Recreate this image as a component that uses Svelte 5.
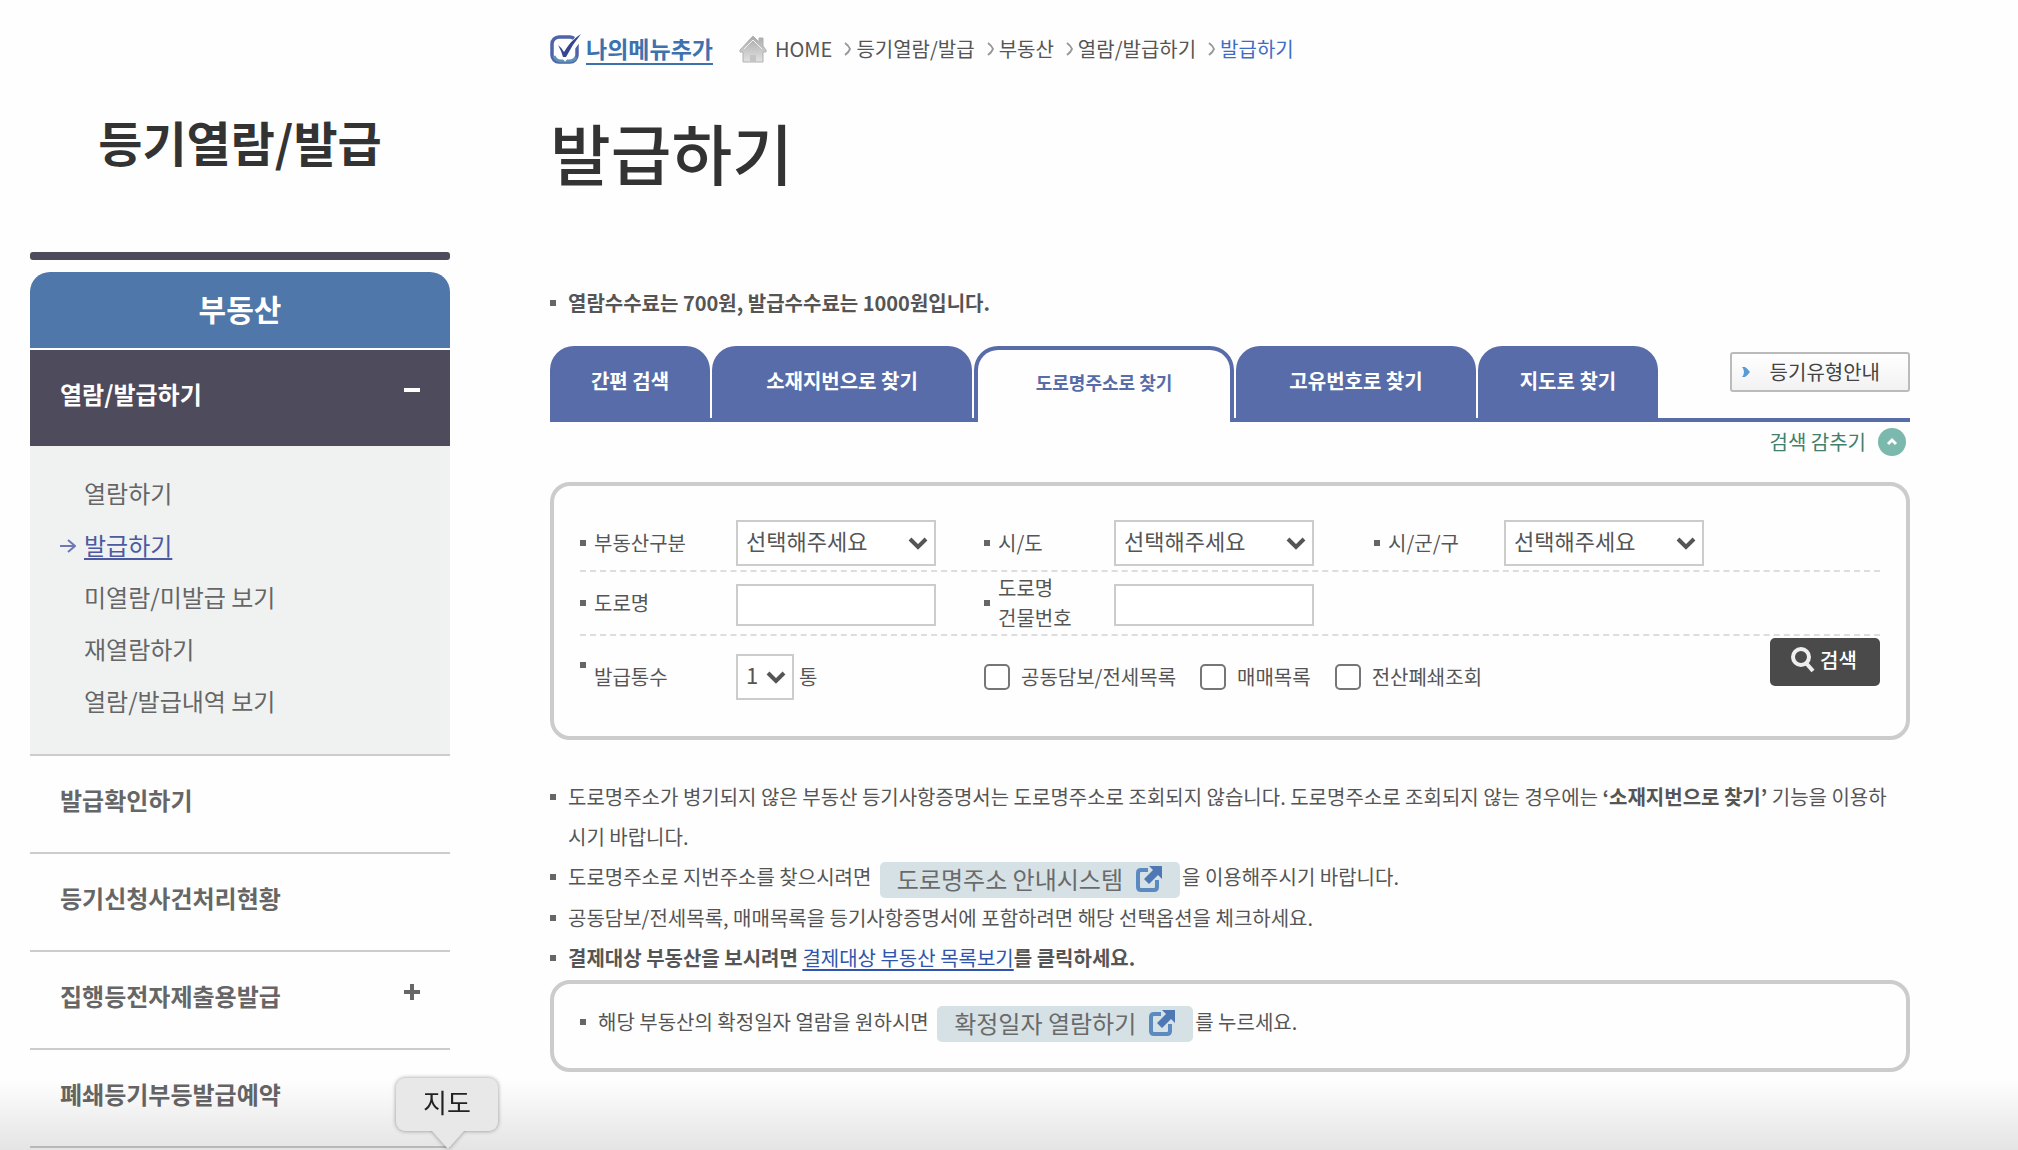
<script>
  const subMenu = [
    "열람하기",
    "발급하기",
    "미열람/미발급 보기",
    "재열람하기",
    "열람/발급내역 보기",
  ];

  const menu = [
    { label: "발급확인하기" },
    { label: "등기신청사건처리현황" },
    { label: "집행등전자제출용발급", more: true },
    { label: "폐쇄등기부등발급예약" },
  ];

  const path = ["등기열람/발급", "부동산", "열람/발급하기", "발급하기"];

  const tabs = [
    { label: "간편 검색", size: 160 },
    { label: "소재지번으로 찾기", size: 260 },
    { label: "도로명주소로 찾기", size: 260 },
    { label: "고유번호로 찾기", size: 240 },
    { label: "지도로 찾기", size: 180 },
  ];

  const options = ["공동담보/전세목록", "매매목록", "전산폐쇄조회"];

  let currentSub = "발급하기";
  let currentTab = "도로명주소로 찾기";
</script>

<div class="page">
  <aside>
    <h2>등기열람/발급</h2>
    <div class="bar"></div>
    <div class="category">부동산</div>
    <a class="item open" href="#open">
      열람/발급하기
      <svg class="sign" viewBox="0 0 16 16"><path d="M0 8h16" /></svg>
    </a>
    <ul class="sub">
      {#each subMenu as name}
        <li class:current={name === currentSub}>
          {#if name === currentSub}
            <svg class="arrow" viewBox="0 0 16 14"><path d="M0 7h15M8 1l7 6-7 6" /></svg>
          {/if}
          <a href="#sub">{name}</a>
        </li>
      {/each}
    </ul>
    {#each menu as m}
      <a class="item" href="#menu">
        {m.label}
        {#if m.more}
          <svg class="sign" viewBox="0 0 16 16"><path d="M0 8h16M8 0v16" /></svg>
        {/if}
      </a>
    {/each}
  </aside>

  <main>
    <div class="crumbs">
      <a class="mymenu" href="#mymenu">
        <svg viewBox="0 0 32 30">
          <rect x="2" y="3" width="25" height="25" rx="7" fill="#fff" stroke="#4f63a8" stroke-width="3.5" />
          <path d="M4 22q2 5 7 5h8q5 0 7-4" fill="none" stroke="#5b93b8" stroke-width="3" />
          <path d="M7 12l8 10L31 1" fill="none" stroke="#fff" stroke-width="7" />
          <path d="M8 11q4 3 6 7Q21 6 31 0 22 11 16 23h-3Q11 16 8 11z" fill="#34468f" />
        </svg>
        <span>나의메뉴추가</span>
      </a>
      <svg class="house" viewBox="0 0 28 28">
        <defs>
          <linearGradient id="roof" x1="0" y1="0" x2="0" y2="1">
            <stop offset="0" stop-color="#a9a9a9" />
            <stop offset="1" stop-color="#e2e2e2" />
          </linearGradient>
        </defs>
        <path d="M14 1l6 6V3h4v8l3 4v2h-3v10H4V17H1v-2z" fill="url(#roof)" stroke="#b0b0b0" />
        <path d="M5 14l9-9 9 9" fill="none" stroke="#f1f1f1" />
        <path d="M11 27v-7h6v7" fill="#c4c4c4" />
      </svg>
      <a href="#home">HOME</a>
      {#each path as p, i}
        <svg class="chev" viewBox="0 0 8 14"><path d="M1 1q4 3 5 6-1 3-5 6" /></svg>
        <a href="#path" class:here={i === path.length - 1}>{p}</a>
      {/each}
    </div>

    <h1>발급하기</h1>

    <ul class="notes fee">
      <li><strong>열람수수료는 700원, 발급수수료는 1000원입니다.</strong></li>
    </ul>

    <div class="tabrow">
      <nav>
        {#each tabs as t}
          <button
            class="tab"
            class:active={t.label === currentTab}
            style="width: {t.size}px"
            on:click={() => (currentTab = t.label)}>{t.label}</button>
        {/each}
      </nav>
      <button class="guide">
        <svg viewBox="0 0 8 12"><path d="M0 1h3q3 2 5 5-2 3-5 5H0q2-2 2-5T0 1z" /></svg>
        등기유형안내
      </button>
    </div>

    <button class="fold">
      검색 감추기
      <svg viewBox="0 0 28 28">
        <circle cx="14" cy="14" r="14" fill="#7bb8ad" />
        <path d="M10 16l4-4 4 4" fill="none" stroke="#fff" stroke-width="3" />
      </svg>
    </button>

    <form class="box" on:submit|preventDefault>
      <div class="row first">
        <label for="kind">부동산구분</label>
        <div class="pick">
          <select id="kind"><option>선택해주세요</option></select>
          <svg viewBox="0 0 20 14"><path d="M2 3l8 8 8-8" /></svg>
        </div>
        <label for="sido">시/도</label>
        <div class="pick">
          <select id="sido"><option>선택해주세요</option></select>
          <svg viewBox="0 0 20 14"><path d="M2 3l8 8 8-8" /></svg>
        </div>
        <label for="gu">시/군/구</label>
        <div class="pick">
          <select id="gu"><option>선택해주세요</option></select>
          <svg viewBox="0 0 20 14"><path d="M2 3l8 8 8-8" /></svg>
        </div>
      </div>
      <div class="row">
        <label for="road">도로명</label>
        <input id="road" type="text" />
        <label for="bldg"><span>도로명<br />건물번호</span></label>
        <input id="bldg" type="text" />
      </div>
      <div class="row last">
        <label class="top" for="copies">발급통수</label>
        <div class="copies">
          <div class="pick small">
            <select id="copies"><option>1</option></select>
            <svg viewBox="0 0 20 14"><path d="M2 3l8 8 8-8" /></svg>
          </div>
          통
        </div>
        <div class="checks">
          {#each options as o}
            <label><input type="checkbox" />{o}</label>
          {/each}
        </div>
        <button class="search" type="submit">
          <svg viewBox="0 0 26 26">
            <circle cx="11" cy="10" r="8" />
            <path d="M16 16l7 8" />
          </svg>
          검색
        </button>
      </div>
    </form>

    <ul class="notes">
      <li>
        도로명주소가 병기되지 않은 부동산 등기사항증명서는 도로명주소로 조회되지 않습니다. 도로명주소로 조회되지 않는 경우에는 <strong>‘소재지번으로 찾기’</strong> 기능을 이용하시기 바랍니다.
      </li>
      <li>
        도로명주소로 지번주소를 찾으시려면
        <a class="chip" href="#juso">도로명주소 안내시스템<svg viewBox="0 0 28 28">
          <path d="M13 5H6q-3 0-3 3v14q0 3 3 3h13q3 0 3-3v-7" fill="none" stroke="#5a8ac0" stroke-width="4" />
          <path d="M14 1h13v13l-4-4-9 9-5-5 9-9z" fill="#4d78b4" />
        </svg></a>을 이용해주시기 바랍니다.
      </li>
      <li>공동담보/전세목록, 매매목록을 등기사항증명서에 포함하려면 해당 선택옵션을 체크하세요.</li>
      <li>
        <strong>결제대상 부동산을 보시려면</strong>
        <a class="link" href="#pay">결제대상 부동산 목록보기</a><strong>를 클릭하세요.</strong>
      </li>
    </ul>

    <div class="box fixdate">
      <ul class="notes">
        <li>
          해당 부동산의 확정일자 열람을 원하시면
          <a class="chip" href="#date">확정일자 열람하기<svg viewBox="0 0 28 28">
            <path d="M13 5H6q-3 0-3 3v14q0 3 3 3h13q3 0 3-3v-7" fill="none" stroke="#5a8ac0" stroke-width="4" />
            <path d="M14 1h13v13l-4-4-9 9-5-5 9-9z" fill="#4d78b4" />
          </svg></a>를 누르세요.
        </li>
      </ul>
    </div>
  </main>
</div>

<div class="shade"></div>
<div class="tip">지도</div>

<style>
  :global(body) {
    background: #fefefe;
    color: #555;
    font-family: "Noto Sans CJK KR", "Noto Sans", sans-serif;
    font-size: 20px;
    line-height: 30px;
  }
  * {
    box-sizing: border-box;
  }
  h1,
  h2,
  ul {
    margin: 0;
    padding: 0;
  }
  ul {
    list-style: none;
  }
  a {
    color: inherit;
    text-decoration: none;
  }
  button,
  input,
  select {
    font: inherit;
    color: inherit;
    margin: 0;
  }
  .page {
    display: flex;
    gap: 100px;
    padding: 0 108px 0 30px;
  }

  /* left menu */
  aside {
    flex: none;
    width: 420px;
    font-size: 24px;
    color: #666;
  }
  h2 {
    padding-top: 105px;
    height: 252px;
    font-size: 48px;
    line-height: 72px;
    text-align: center;
    color: #333;
  }
  .bar {
    height: 8px;
    border-radius: 3px;
    background: #4e4c5c;
  }
  .category {
    margin: 12px 0 2px;
    height: 76px;
    border-radius: 20px 20px 0 0;
    background: #4f77aa;
    color: #fff;
    font-size: 30px;
    font-weight: bold;
    line-height: 72px;
    text-align: center;
  }
  .item {
    display: flex;
    align-items: center;
    justify-content: space-between;
    height: 98px;
    padding: 0 30px 8px;
    border-bottom: 2px solid #ccc;
    font-weight: bold;
  }
  .item.open {
    height: 96px;
    border: 0;
    background: #4e4c5c;
    color: #fff;
  }
  .sign {
    width: 16px;
    height: 16px;
    margin-bottom: 8px;
    stroke: currentColor;
    stroke-width: 4;
  }
  .sub {
    padding: 21px 0 27px 54px;
    border-bottom: 2px solid #ccc;
    background: #f0f2f1;
  }
  .sub li {
    position: relative;
    height: 52px;
    line-height: 52px;
  }
  .sub .current {
    color: #4d5aa0;
  }
  .current a {
    text-decoration: underline;
    text-decoration-thickness: 2px;
    text-underline-offset: 3px;
  }
  .arrow {
    position: absolute;
    left: -24px;
    top: 20px;
    width: 16px;
    height: 14px;
    fill: none;
    stroke: #7078b4;
    stroke-width: 2;
  }

  /* content */
  main {
    flex: 1;
    min-width: 0;
  }
  .crumbs {
    display: flex;
    align-items: center;
    height: 98px;
  }
  .crumbs svg {
    flex: none;
  }
  .mymenu {
    display: flex;
    align-items: center;
    gap: 4px;
    margin-right: 26px;
    color: #3e72ae;
    font-size: 23px;
    font-weight: bold;
  }
  .mymenu svg {
    width: 32px;
    height: 30px;
  }
  .mymenu span {
    border-bottom: 2px solid #3e72ae;
  }
  .house {
    width: 28px;
    height: 28px;
    margin-right: 8px;
  }
  .chev {
    width: 8px;
    height: 14px;
    margin: 0 4px 0 12px;
    fill: none;
    stroke: #999;
    stroke-width: 2;
  }
  .here {
    color: #3c6cc8;
  }
  h1 {
    height: 185px;
    padding-top: 5px;
    font-size: 66px;
    font-weight: 500;
    line-height: 96px;
    color: #333;
  }
  .notes li {
    position: relative;
    padding: 0 12px 0 18px;
    line-height: 40px;
  }
  .notes li::before,
  .row > label::before {
    content: "";
    flex: none;
    width: 6px;
    height: 6px;
    background: #666;
  }
  .notes li::before {
    position: absolute;
    left: 0;
    top: 17px;
  }
  .fee {
    margin-bottom: 23px;
  }
  .tabrow {
    display: flex;
    justify-content: space-between;
    border-bottom: 4px solid #576ca8;
  }
  nav {
    display: flex;
    gap: 2px;
  }
  .tab {
    height: 72px;
    padding: 0 0 2px;
    border: 0;
    border-radius: 24px 24px 0 0;
    background: #576ca8;
    color: #fff;
    font-weight: bold;
  }
  .tab.active {
    height: 76px;
    margin-bottom: -4px;
    padding-bottom: 8px;
    border: 4px solid #576ca8;
    border-bottom: 0;
    background: #fefefe;
    color: #576ca8;
    font-size: 18px;
  }
  .guide {
    display: flex;
    align-items: center;
    justify-content: space-between;
    width: 180px;
    height: 40px;
    margin-top: 6px;
    padding: 0 28px 0 10px;
    border: 2px solid #bbb;
    border-radius: 3px;
    background: linear-gradient(#fff, #f2f2f2);
    color: #444;
  }
  .guide svg {
    width: 8px;
    height: 12px;
    fill: #5b9bd5;
  }
  .fold {
    display: flex;
    align-items: center;
    gap: 12px;
    margin: 6px 4px 26px auto;
    padding: 0;
    height: 28px;
    border: 0;
    background: none;
    color: #40806c;
  }
  .fold svg {
    width: 28px;
    height: 28px;
  }
  .box {
    border: 4px solid #ccc;
    border-radius: 20px;
    padding: 22px 26px 18px;
  }
  .row {
    display: grid;
    grid-template-columns: 156px 248px 130px 260px 130px 1fr;
    align-items: center;
    height: 64px;
    border-bottom: 2px dashed #ddd;
  }
  .row.first {
    padding-top: 8px;
  }
  .row.last {
    grid-template-columns: 156px 248px 1fr auto;
    height: 82px;
    border: 0;
  }
  .row > label {
    display: flex;
    align-items: center;
    gap: 8px;
  }
  .row > .top {
    align-items: flex-start;
  }
  .pick {
    position: relative;
    width: 200px;
  }
  .pick.small {
    width: 58px;
  }
  select,
  input[type="text"] {
    width: 200px;
    height: 46px;
    border: 2px solid #ccc;
    border-radius: 0;
    background: #fff;
  }
  input[type="text"] {
    height: 42px;
    margin-top: 3px;
  }
  select {
    appearance: none;
    width: 100%;
    padding: 0 8px 6px;
    font-size: 22px;
  }
  .pick svg {
    position: absolute;
    right: 8px;
    top: 16px;
    width: 20px;
    height: 14px;
    fill: none;
    stroke: #555;
    stroke-width: 4;
    pointer-events: none;
  }
  .copies {
    display: flex;
    align-items: center;
    gap: 5px;
  }
  .checks,
  .checks label {
    display: flex;
    align-items: center;
  }
  .checks {
    gap: 24px;
  }
  .checks label {
    gap: 11px;
  }
  input[type="checkbox"] {
    appearance: none;
    width: 26px;
    height: 26px;
    border: 2px solid #767676;
    border-radius: 5px;
    background: #fff;
  }
  .search {
    display: flex;
    align-self: start;
    align-items: center;
    gap: 4px;
    width: 110px;
    height: 48px;
    margin-top: 2px;
    padding: 0 20px 4px;
    border: 0;
    border-radius: 5px;
    background: #4a4a4a;
    color: #fff;
    font-weight: 500;
    white-space: nowrap;
  }
  .search svg {
    flex: none;
    width: 26px;
    height: 26px;
    fill: none;
    stroke: #eee;
    stroke-width: 4;
  }
  .box + .notes {
    padding-top: 37px;
  }
  .link {
    color: #2f55ad;
    text-decoration: underline;
    text-decoration-thickness: 2px;
    text-underline-offset: 3px;
  }
  .chip {
    display: inline-flex;
    align-items: center;
    gap: 12px;
    height: 36px;
    margin: 0 2px 0 4px;
    padding: 0 17px 2px;
    border-radius: 5px;
    background: #d6e1e6;
    color: #6a6a6a;
    font-size: 24px;
    line-height: 34px;
    vertical-align: middle;
  }
  .chip svg {
    width: 28px;
    height: 28px;
  }
  .fixdate {
    margin-top: 2px;
    padding: 18px 26px 26px;
  }

  /* bottom edge of the window */
  .shade {
    position: fixed;
    left: 0;
    right: 0;
    bottom: 0;
    height: 70px;
    background: linear-gradient(rgba(0, 0, 0, 0), rgba(0, 0, 0, 0.1));
    pointer-events: none;
  }
  .tip {
    position: fixed;
    left: 396px;
    bottom: 19px;
    width: 102px;
    height: 53px;
    border-radius: 9px;
    background: #e8e8e8;
    filter: drop-shadow(0 0 2px rgba(0, 0, 0, 0.4));
    color: #222;
    font-size: 26px;
    line-height: 48px;
    text-align: center;
  }
  .tip::after {
    content: "";
    position: absolute;
    left: 36px;
    top: 53px;
    border: 16px solid transparent;
    border-top: 18px solid #e8e8e8;
    border-bottom: 0;
  }
</style>
